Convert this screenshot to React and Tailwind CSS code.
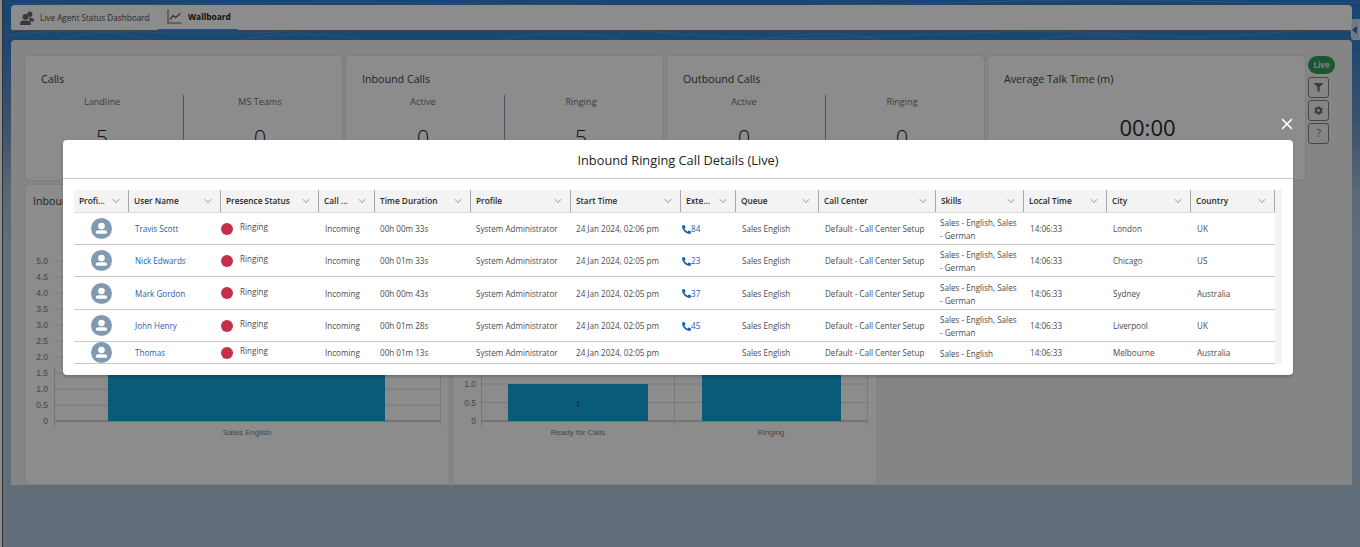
import React from "react";
import { ChevronDown, X } from "lucide-react";
import { FaFilter, FaCog, FaPhoneAlt } from "react-icons/fa";

const columns = [
  { label: "Profi...", width: 55 },
  { label: "User Name", width: 92 },
  { label: "Presence Status", width: 98 },
  { label: "Call ...", width: 56 },
  { label: "Time Duration", width: 96 },
  { label: "Profile", width: 100 },
  { label: "Start Time", width: 110 },
  { label: "Exte...", width: 55 },
  { label: "Queue", width: 83 },
  { label: "Call Center", width: 117 },
  { label: "Skills", width: 88 },
  { label: "Local Time", width: 83 },
  { label: "City", width: 84 },
  { label: "Country", width: 84 },
];

const twoSkills = "Sales - English, Sales - German";

const rows = [
  { name: "Travis Scott", time: "00h 00m 33s", start: "24 Jan 2024, 02:06 pm", ext: "84", skills: twoSkills, city: "London", country: "UK", h: "h-[32px]" },
  { name: "Nick Edwards", time: "00h 01m 33s", start: "24 Jan 2024, 02:05 pm", ext: "23", skills: twoSkills, city: "Chicago", country: "US", h: "h-[32px]" },
  { name: "Mark Gordon", time: "00h 00m 43s", start: "24 Jan 2024, 02:05 pm", ext: "37", skills: twoSkills, city: "Sydney", country: "Australia", h: "h-[33px]" },
  { name: "John Henry", time: "00h 01m 28s", start: "24 Jan 2024, 02:05 pm", ext: "45", skills: twoSkills, city: "Liverpool", country: "UK", h: "h-[32px]" },
  { name: "Thomas", time: "00h 01m 13s", start: "24 Jan 2024, 02:05 pm", ext: "", skills: "Sales - English", city: "Melbourne", country: "Australia", h: "h-[22px]" },
];

const statCards = [
  { title: "Calls", left: ["Landline", "5"], right: ["MS Teams", "0"] },
  { title: "Inbound Calls", left: ["Active", "0"], right: ["Ringing", "5"] },
  { title: "Outbound Calls", left: ["Active", "0"], right: ["Ringing", "0"] },
];

const Avatar = () => (
  <svg width="21" height="21" viewBox="0 0 21 21" className="mx-auto block">
    <circle cx="10.5" cy="10.5" r="10.5" fill="#8199b1" />
    <circle cx="10.5" cy="8" r="3.3" fill="#fff" />
    <path d="M4.8 14.6c0-1.6 1.3-2.4 2.6-2.4h6.2c1.3 0 2.6.8 2.6 2.4 0 .7-.5 1.2-1.2 1.2H6c-.7 0-1.2-.5-1.2-1.2z" fill="#fff" />
  </svg>
);

const StatCard = ({ title, left, right }) => (
  <div className="w-[317px] h-[124px] bg-white rounded-[4px] shadow-[0_0_2px_rgba(0,0,0,0.2)] pt-[15px]">
    <p className="pl-[16px] text-[10.7px] leading-[16px] text-[#3e3e3c]">{title}</p>
    <div className="flex mt-[8px]">
      <div className="w-[159px] h-[70px] pr-[4px] text-center border-r border-[#8a97ab]">
        <p className="text-[9.1px] leading-[14px] text-[#706e6b]">{left[0]}</p>
        <p className="text-[22px] font-light leading-[30px] mt-[13px] text-[#222]">{left[1]}</p>
      </div>
      <div className="w-[158px] h-[70px] pr-[6px] text-center">
        <p className="text-[9.1px] leading-[14px] text-[#706e6b]">{right[0]}</p>
        <p className="text-[22px] font-light leading-[30px] mt-[13px] text-[#222]">{right[1]}</p>
      </div>
    </div>
  </div>
);

const GridChart = ({ title, ticks, yOf, labelX, axisX, rightX, midX, bars, labels }) => (
  <div className="w-[424px] h-[299px] bg-white rounded-[4px] shadow-[0_0_2px_rgba(0,0,0,0.2)]">
    <p className="h-[32px] pl-[8px] pt-[8px] text-[10.7px] leading-[16px] text-[#3e3e3c]">{title}</p>
    <svg width="424" height="267" className="block">
      {ticks.map((t) => (
        <g key={t}>
          <line x1={axisX} x2={rightX} y1={yOf(t)} y2={yOf(t)} stroke={t === 0 ? "#a8a8a8" : "#dcdcdc"} />
          <text x={labelX} y={yOf(t) + 3} textAnchor="end" fontSize="8.5" fill="#808080" fontFamily="Liberation Sans">
            {t === 0 ? "0" : t.toFixed(1)}
          </text>
        </g>
      ))}
      <line x1={axisX} x2={axisX} y1="150" y2="209" stroke="#d0d0d0" />
      <line x1={rightX} x2={rightX} y1="150" y2="209" stroke="#dcdcdc" />
      {midX && <line x1={midX} x2={midX} y1="150" y2="209" stroke="#dcdcdc" />}
      {bars.map((b, i) => (
        <g key={i}>
          <rect x={b.x} width={b.w} y={yOf(b.v)} height={yOf(0) - yOf(b.v)} fill="#13a5dc" />
          {b.showValue && (
            <text x={b.x + b.w / 2} y={(yOf(b.v) + yOf(0)) / 2 + 3} textAnchor="middle" fontSize="8" fill="#333" fontFamily="Liberation Sans">
              {b.v}
            </text>
          )}
        </g>
      ))}
      {labels.map((l) => (
        <text key={l.text} x={l.x} y="218" textAnchor="middle" fontSize="8" fill="#808080" fontFamily="Liberation Sans">
          {l.text}
        </text>
      ))}
    </svg>
  </div>
);

const App = () => {
  return (
    <div className="relative w-[1360px] h-[547px] overflow-hidden font-['Open_Sans',sans-serif] bg-[linear-gradient(180deg,#2f7fcf_0px,#3482ce_40px,#7397c4_130px,#a5bcd9_190px,#b2c6de_240px)]">
      <svg className="absolute left-0 top-0" width="1360" height="40" fill="none" stroke="#ffffff" strokeOpacity="0.14">
        <path d="M0 36C120 22 180 42 300 30S520 20 680 34 980 24 1120 34 1280 24 1360 32" />
        <path d="M60 40C90 30 120 30 150 40M240 40C270 32 330 32 360 40M500 40C540 31 590 31 620 40M760 40C800 32 850 32 880 40M1040 40C1070 33 1110 33 1140 40" />
        <path d="M0 3C150 8 260 0 420 3S800 8 980 2 1240 6 1360 2" />
      </svg>

      <div className="absolute left-0 top-0 bottom-0 w-[3px] bg-white border-r border-[#5a5a5a]" />

      <div className="relative pt-[5px] pl-[11px] pr-[8px] h-[40px]">
        <nav className="flex items-center h-[26px] bg-white rounded-t-[4px] rounded-b-[2px] border-b border-[#7b7b7b] pl-[9px]">
          <div className="flex items-center gap-[6px] w-[138px]">
            <svg width="14" height="14" viewBox="0 0 14 14" fill="#686868" className="shrink-0">
              <circle cx="9.8" cy="3.2" r="2.6" />
              <path d="M9 6.8h1.8c1.6 0 3.2 1 3.2 2.4v1.3H9.6c0-1.6-.4-2.8-1.6-3.4z" />
              <circle cx="5.4" cy="5.8" r="2.9" />
              <path d="M0 14v-1.6c0-2 1.8-3 3.6-3h3.6c1.8 0 3.6 1 3.6 3V14z" />
            </svg>
            <span className="pt-[1px] text-[8.2px] text-[#4c4c4c] whitespace-nowrap">Live Agent Status Dashboard</span>
          </div>
          <div className="flex items-center gap-[6px] h-[26px] w-[80px] pl-[9px] border-b-2 border-[#4a86d8]">
            <svg width="15" height="15" viewBox="0 0 15 15" fill="none" stroke="#686868" className="shrink-0">
              <path d="M1 0.5V14H14.5" strokeWidth="1.1" />
              <path d="M3 10.5L6 6.5L8.5 8.5L13.5 4.5" strokeWidth="1.5" />
            </svg>
            <span className="pt-[2px] text-[8.4px] font-bold text-[#222]">Wallboard</span>
          </div>
        </nav>
      </div>

      <div className="absolute right-0 top-[19px] w-[9px] h-[21px] bg-[#c6dcf4] border border-[#e8eef6] rounded-l-[3px] flex items-center">
        <span className="w-0 h-0 border-y-[4px] border-y-transparent border-r-[5px] border-r-[#3e6fa8]" />
      </div>

      <main className="relative ml-[11px] w-[1341px] h-[445px] bg-[#f2f2f2] rounded-t-[4px] pl-[14px] pt-[16px]">
        <div className="flex">
          <div className="flex gap-[4px]">
            {statCards.map((card) => (
              <StatCard key={card.title} {...card} />
            ))}
            <div className="w-[317px] h-[124px] bg-white rounded-[4px] shadow-[0_0_2px_rgba(0,0,0,0.2)] px-[16px] pt-[15px]">
              <p className="text-[10.7px] leading-[16px] text-[#3e3e3c]">Average Talk Time (m)</p>
              <p className="text-[22px] leading-[30px] mt-[25px] pl-[2px] text-center text-[#1c2a3c]">00:00</p>
            </div>
          </div>
          <div className="ml-[3px] flex flex-col items-start gap-[2px]">
            <span className="w-[27px] h-[18px] rounded-full bg-[#339c5c] text-[8px] font-bold text-[#dcefe2] flex items-center justify-center">Live</span>
            <button className="mt-[1px] w-[21px] h-[21px] border border-[#808080] rounded-[3px] flex items-center justify-center text-[#707070]">
              <FaFilter size={9} />
            </button>
            <button className="w-[21px] h-[21px] border border-[#808080] rounded-[3px] flex items-center justify-center text-[#707070]">
              <FaCog size={9} />
            </button>
            <button className="w-[21px] h-[21px] border border-[#808080] rounded-[3px] flex items-center justify-center text-[11px] text-[#707070]">?</button>
          </div>
        </div>

        <div className="flex gap-[4px] mt-[5px]">
          <GridChart
            title="Inbound Calls"
            ticks={[0, 0.5, 1, 1.5, 2, 2.5, 3, 3.5, 4, 4.5, 5]}
            yOf={(v) => 204 - 32 * v}
            labelX={23}
            axisX={29.5}
            rightX={415.5}
            bars={[{ x: 83, w: 277, v: 5 }]}
            labels={[{ text: "Sales English", x: 222 }]}
          />
          <GridChart
            ticks={[0, 0.5, 1]}
            yOf={(v) => 204 - 37 * v}
            labelX={23}
            axisX={28.5}
            rightX={414.5}
            midX={221.5}
            bars={[
              { x: 55, w: 140, v: 1, showValue: true },
              { x: 249, w: 139, v: 4 },
            ]}
            labels={[
              { text: "Ready for Calls", x: 125 },
              { text: "Ringing", x: 318 },
            ]}
          />
        </div>
      </main>

      <div className="absolute inset-0 bg-black/45">
        <section className="absolute left-[63px] top-[140px] w-[1230px] h-[235px] bg-white rounded-[4px] shadow-[0_2px_3px_rgba(0,0,0,0.2)]">
          <X size={18} strokeWidth={2.2} className="absolute right-[-3px] top-[-25px] text-white" />
          <h2 className="h-[39px] border-b border-[#c9c9c9] text-center text-[12.8px] leading-[40px] text-[#222]">
            Inbound Ringing Call Details (Live)
          </h2>
          <div className="mt-[11px] ml-[11px] w-[1208px] h-[174px] bg-[#f3f3f3]">
            <table className="table-fixed w-[1200px] border-collapse bg-white text-[8.1px] text-[#4a4a4a]">
              <colgroup>
                {columns.map((col) => (
                  <col key={col.label} style={{ width: col.width }} />
                ))}
              </colgroup>
              <thead>
                <tr className="h-[22px] bg-[#f3f3f3] border-b border-[#dcdcdc]">
                  {columns.map((col) => (
                    <th key={col.label} className="p-0 text-left text-[8.3px] font-semibold text-[#2b2826]">
                      <div className="flex items-center justify-between h-[22px] pl-[5px] pr-[6px] border-r border-[#a8a8a8] whitespace-nowrap">
                        <span>{col.label}</span>
                        <ChevronDown size={12} strokeWidth={1.3} className="text-[#5f5d5a]" />
                      </div>
                    </th>
                  ))}
                </tr>
              </thead>
              <tbody>
                {rows.map((row) => (
                  <tr key={row.name} className={`${row.h} border-b border-[#c9c9c9]`}>
                    <td className="p-0"><Avatar /></td>
                    <td className="pl-[6px] pt-[2px] text-[#1b61b0] whitespace-nowrap">{row.name}</td>
                    <td className="p-0">
                      <div className="flex items-center gap-[7px]">
                        <span className="w-[12px] h-[12px] rounded-full bg-[#c23049]" />
                        <span className="-mt-[2px]">Ringing</span>
                      </div>
                    </td>
                    <td className="pl-[6px] pt-[2px]">Incoming</td>
                    <td className="pl-[5px] pt-[2px] whitespace-nowrap">{row.time}</td>
                    <td className="pl-[5px] pt-[2px] whitespace-nowrap">System Administrator</td>
                    <td className="pl-[5px] pt-[2px] whitespace-nowrap">{row.start}</td>
                    <td className="pl-[1px] pt-[2px] text-[#1b61b0]">
                      {row.ext && (
                        <span className="flex items-center">
                          <FaPhoneAlt size={9} className="text-[#1b61b0]" />
                          {row.ext}
                        </span>
                      )}
                    </td>
                    <td className="pl-[6px] pt-[2px] whitespace-nowrap">Sales English</td>
                    <td className="pl-[6px] pt-[2px] whitespace-nowrap">Default - Call Center Setup</td>
                    <td className="pl-[4px] pr-[5px] pt-[1px] leading-[13px]">{row.skills}</td>
                    <td className="pl-[6px] pt-[2px]">14:06:33</td>
                    <td className="pl-[6px] pt-[2px]">{row.city}</td>
                    <td className="pl-[6px] pt-[2px]">{row.country}</td>
                  </tr>
                ))}
              </tbody>
            </table>
          </div>
        </section>
      </div>
    </div>
  );
};

export default App;
